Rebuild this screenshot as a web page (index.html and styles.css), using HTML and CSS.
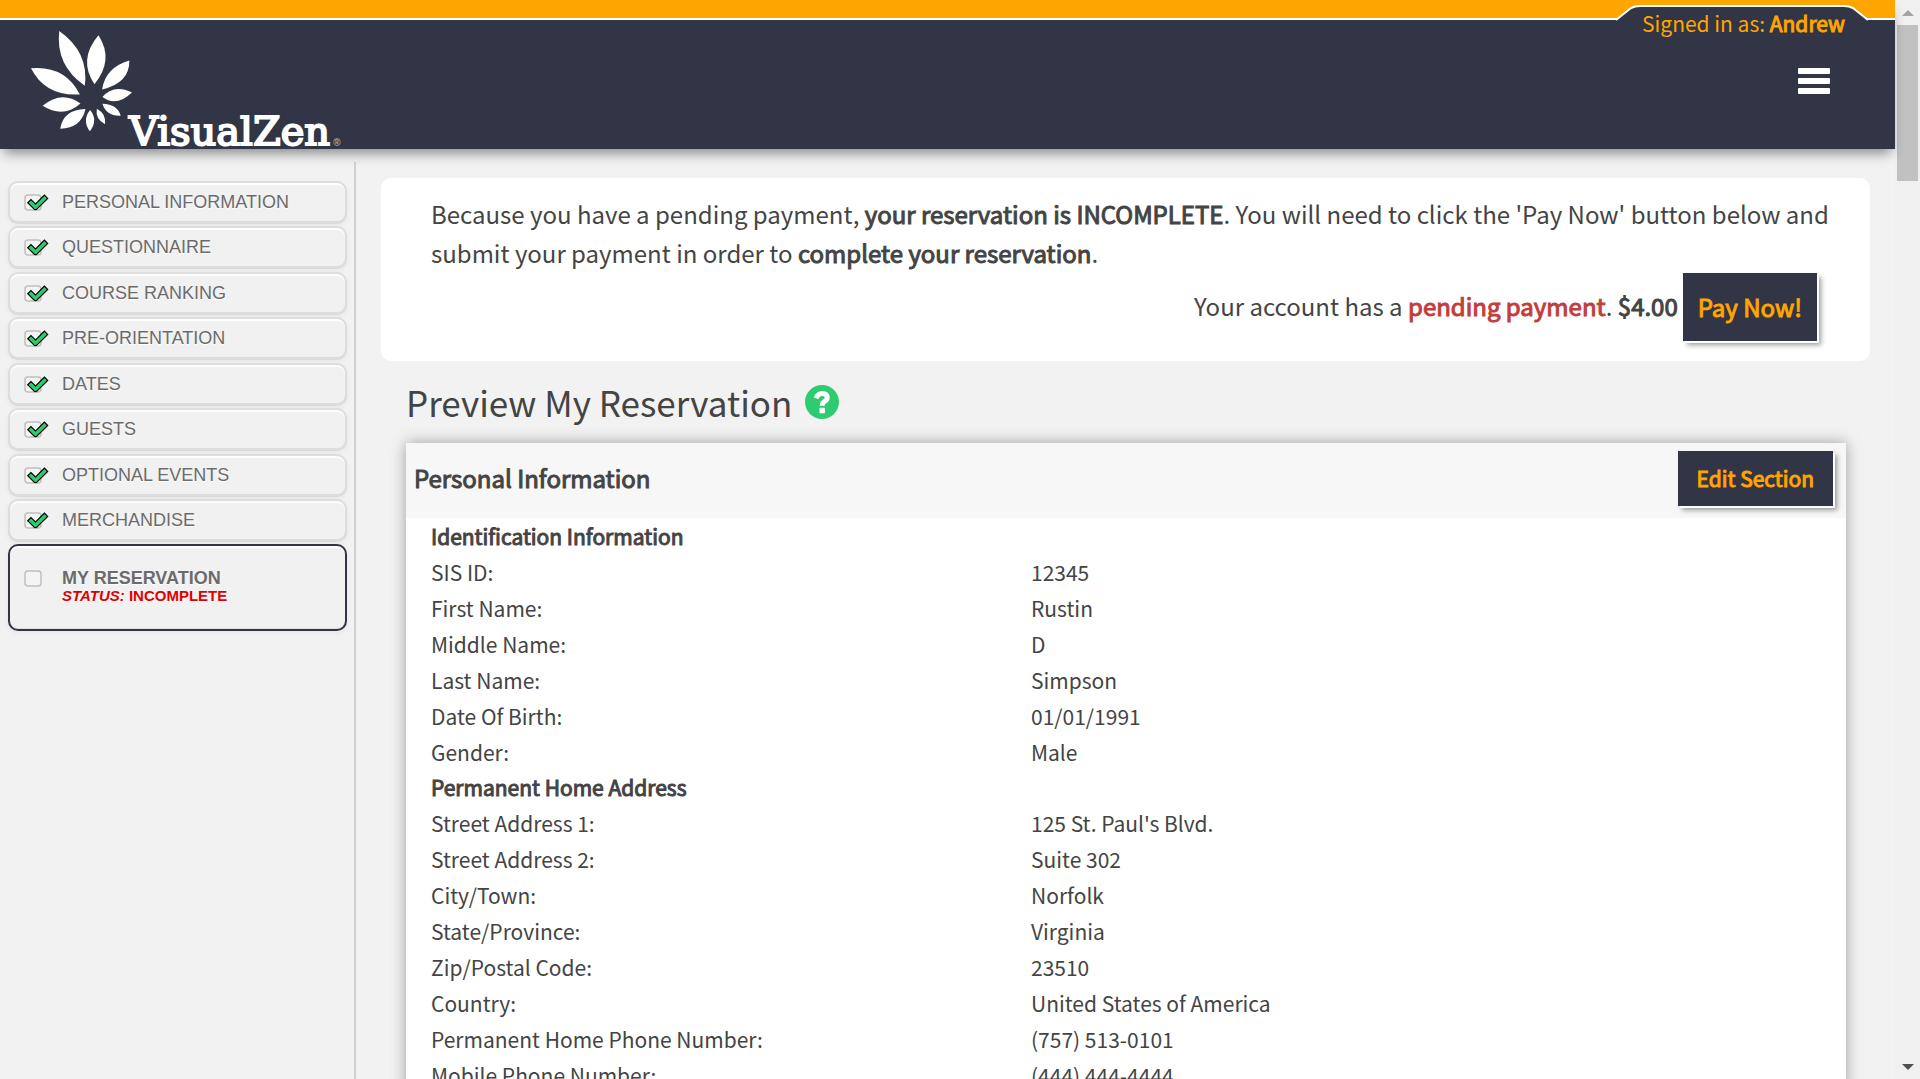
FILE: index.html
```html
<!DOCTYPE html>
<html lang="en">
<head>
<meta charset="utf-8">
<meta name="viewport" content="width=device-width, initial-scale=1">
<title>Preview My Reservation - VisualZen</title>
<link rel="stylesheet" href="styles.css">
</head>
<body>
<svg class="symbols" aria-hidden="true">
  <symbol id="box" viewBox="0 0 26 20"><rect x="1" y="3" width="16" height="15" rx="3" fill="#f4f4f4" stroke="#bfbfbf" stroke-width="1.5"/></symbol>
  <symbol id="check" viewBox="0 0 26 20">
    <rect x="1" y="3" width="16" height="15" rx="3" fill="#f4f4f4" stroke="#bfbfbf" stroke-width="1.5"/>
    <g fill="none" stroke-linecap="square" stroke-linejoin="round">
      <path d="M7 10.8L11.5 15.2L20.4 6.4" stroke="#000" stroke-width="5.8"/>
      <path d="M7 10.8L11.5 15.2L20.4 6.4" stroke="#2ecc71" stroke-width="3.4"/>
    </g>
  </symbol>
</svg>
<div class="window">
  <div class="page">
    <header class="header">
      <a class="logo" href="#">
        <svg class="lotus" viewBox="90 90 310 310" aria-hidden="true"><g fill="#fff">
          <path d="M178 93Q268 156 255 258Q166 196 178 93Z"/>
          <path d="M296 106Q344 180 284 253Q234 180 296 106Z"/>
          <path d="M389 182Q390 250 307 269Q317 203 389 182Z"/>
          <path d="M397 278Q350 323 308 292Q342 252 397 278Z"/>
          <path d="M363 348Q320 350 308 312Q354 314 363 348Z"/>
          <path d="M316 374Q286 358 291 327Q320 342 316 374Z"/>
          <path d="M270 395Q246 362 271 331Q296 362 270 395Z"/>
          <path d="M181 387Q190 330 257 328Q244 386 181 387Z"/>
          <path d="M128 318Q185 270 242 311Q190 357 128 318Z"/>
          <path d="M93 205Q196 196 240 284Q136 290 93 205Z"/>
        </g></svg>
        <span class="wordmark">VisualZen</span><span class="mark">®</span>
      </a>
      <div class="account">
        <svg class="account-tab" viewBox="0 0 252 17" aria-hidden="true"><path d="M0 17V15L15 3Q19 1 24 1H228Q233 1 237 3L252 15V17Z" fill="#323545"/><path d="M0 15L15 3Q19 1 24 1H228Q233 1 237 3L252 15" fill="none" stroke="#fff" stroke-width="2"/></svg>
        <span class="account-text">Signed in as: <strong>Andrew</strong></span>
      </div>
      <button class="menu" type="button" aria-label="Menu">
        <svg viewBox="0 0 32 26" aria-hidden="true"><g fill="#fff"><rect width="32" height="6" rx="1"/><rect y="10" width="32" height="6" rx="1"/><rect y="20" width="32" height="6" rx="1"/></g></svg>
      </button>
    </header>
    <div class="columns">
      <nav class="steps" aria-label="Reservation steps">
        <div class="step-list">
          <a class="step" href="#"><svg class="tick"><use href="#check"/></svg>PERSONAL INFORMATION</a>
          <a class="step" href="#"><svg class="tick"><use href="#check"/></svg>QUESTIONNAIRE</a>
          <a class="step" href="#"><svg class="tick"><use href="#check"/></svg>COURSE RANKING</a>
          <a class="step" href="#"><svg class="tick"><use href="#check"/></svg>PRE-ORIENTATION</a>
          <a class="step" href="#"><svg class="tick"><use href="#check"/></svg>DATES</a>
          <a class="step" href="#"><svg class="tick"><use href="#check"/></svg>GUESTS</a>
          <a class="step" href="#"><svg class="tick"><use href="#check"/></svg>OPTIONAL EVENTS</a>
          <a class="step" href="#"><svg class="tick"><use href="#check"/></svg>MERCHANDISE</a>
        </div>
        <a class="step current" href="#" aria-current="step"><svg class="tick"><use href="#box"/></svg><span>MY RESERVATION<span class="status"><em>STATUS:</em> INCOMPLETE</span></span></a>
      </nav>
      <main class="main">
        <section class="notice">
          <p class="notice-text">Because you have a pending payment, <strong>your reservation is INCOMPLETE</strong>. You will need to click the 'Pay Now' button below and submit your payment in order to <strong>complete your reservation</strong>.</p>
          <div class="pay">
            <span class="pay-text">Your account has a <strong class="pending">pending payment</strong>. <strong>$4.00</strong></span>
            <button class="action pay-button" type="button">Pay Now!</button>
          </div>
        </section>
        <h1 class="title">Preview My Reservation
          <svg class="help" viewBox="0 0 34 34" role="img" aria-label="Help"><circle cx="17" cy="17" r="17" fill="#2ecc71"/><path d="M11 13.2Q13 8.4 17 8.4Q22.2 8.4 22.2 12.6Q22.2 15 19.6 16.4Q17.2 17.7 17.2 20.8" fill="none" stroke="#fff" stroke-width="5"/><rect x="14.5" y="22.8" width="5.4" height="5.4" rx="0.6" fill="#fff"/></svg>
        </h1>
        <section class="card">
          <div class="card-head">
            <h2 class="card-title">Personal Information</h2>
            <button class="action edit-button" type="button">Edit Section</button>
          </div>
          <table class="details">
            <colgroup><col class="label-col"><col></colgroup>
            <tbody>
              <tr><th class="group" colspan="2" scope="colgroup">Identification Information</th></tr>
              <tr><th scope="row">SIS ID:</th><td>12345</td></tr>
              <tr><th scope="row">First Name:</th><td>Rustin</td></tr>
              <tr><th scope="row">Middle Name:</th><td>D</td></tr>
              <tr><th scope="row">Last Name:</th><td>Simpson</td></tr>
              <tr><th scope="row">Date Of Birth:</th><td>01/01/1991</td></tr>
              <tr><th scope="row">Gender:</th><td>Male</td></tr>
              <tr><th class="group" colspan="2" scope="colgroup">Permanent Home Address</th></tr>
              <tr><th scope="row">Street Address 1:</th><td>125 St. Paul's Blvd.</td></tr>
              <tr><th scope="row">Street Address 2:</th><td>Suite 302</td></tr>
              <tr><th scope="row">City/Town:</th><td>Norfolk</td></tr>
              <tr><th scope="row">State/Province:</th><td>Virginia</td></tr>
              <tr><th scope="row">Zip/Postal Code:</th><td>23510</td></tr>
              <tr><th scope="row">Country:</th><td>United States of America</td></tr>
              <tr><th scope="row">Permanent Home Phone Number:</th><td>(757) 513-0101</td></tr>
              <tr><th scope="row">Mobile Phone Number:</th><td>(444) 444-4444</td></tr>
            </tbody>
          </table>
        </section>
      </main>
    </div>
  </div>
  <div class="scrollbar" aria-hidden="true">
    <svg class="arrow" viewBox="0 0 12 6"><path d="M0 6L6 0L12 6Z" fill="#a3a3a3"/></svg>
    <div class="thumb"></div>
    <svg class="arrow down" viewBox="0 0 12 6"><path d="M0 0H12L6 6Z" fill="#505050"/></svg>
  </div>
</div>
</body>
</html>
```
FILE: styles.css
```css
* { box-sizing: border-box; }

body {
  margin: 0;
  background: #f2f2f2;
  color: #444;
  font-family: "Noto Sans CJK JP", sans-serif;
  font-size: 21px;
}

/* regular outlines thickened slightly, keeping the regular widths */
strong, .group, .card-title, .action {
  font-weight: 400;
  -webkit-text-stroke: 1px currentColor;
}

button { border: 0; margin: 0; padding: 0; font: inherit; cursor: pointer; }

.symbols { display: none; }

.window { display: flex; height: 100vh; overflow: hidden; }
.page { flex: 1; min-width: 0; }

/* header */
.header {
  position: relative;
  display: flex;
  justify-content: space-between;
  align-items: flex-start;
  height: 149px;
  padding: 12px 65px 0 30px;
  background: #323545;
  border-top: 18px solid #ffa500;
  box-shadow: inset 0 2px #fff, 0 8px 12px -4px rgba(0, 0, 0, .45);
}
.logo { display: flex; align-items: flex-end; color: #fff; text-decoration: none; }
.lotus { width: 103px; height: 103px; margin-bottom: 20px; }
.wordmark {
  margin-left: -4px;
  font: 40px/44px "DejaVu Serif", serif;
  -webkit-text-stroke: 2px currentColor;
}
.mark { margin: 0 0 4px 3px; color: #a9aab2; font: bold 10px/12px "Liberation Sans", sans-serif; }
.account { position: absolute; top: -13px; right: 27px; width: 252px; }
.account-tab { display: block; width: 252px; height: 17px; }
.account-text {
  position: absolute;
  top: 2px;
  left: 26px;
  color: #ffa500;
  line-height: 32px;
  white-space: nowrap;
}
.menu { margin-top: 38px; background: none; }
.menu svg { display: block; width: 32px; height: 26px; }

/* step list */
.columns { display: flex; padding-top: 13px; }
.steps {
  display: flex;
  flex-direction: column;
  gap: 3px;
  flex: 0 0 356px;
  height: 100vh;
  padding: 19px 7px 0 8px;
  border-right: 2px solid #d0d0d0;
  font-family: "Liberation Sans", Arial, sans-serif;
}
.step-list {
  display: flex;
  flex-direction: column;
  justify-content: space-between;
  height: 360px;
}
.step {
  display: flex;
  align-items: center;
  gap: 12px;
  height: 42px;
  padding: 0 14px;
  border: 2px solid #ddd;
  border-radius: 10px;
  background: #f1f1f1;
  box-shadow: inset 0 2px #fdfdfd, 0 1px #dadada, 0 2px 6px rgba(0, 0, 0, .05);
  color: #6b6b6b;
  font-size: 18px;
  line-height: 20px;
  text-decoration: none;
  text-shadow: 0 1px #fff;
}
.tick { flex: none; width: 26px; height: 20px; }
.current {
  align-items: flex-start;
  height: 87px;
  padding-top: 22px;
  border-color: #323545;
  box-shadow: inset 0 2px #fdfdfd, inset 0 -1px #ddd, 0 2px 6px rgba(0, 0, 0, .05);
  font-weight: 700;
}
.status { display: block; color: #e00000; font-size: 15px; line-height: 16px; }

/* main column */
.main { flex: 1; min-width: 0; padding: 16px 25px 0; }
.notice {
  padding: 16px 40px 20px 50px;
  border-radius: 10px;
  background: #fff;
  font-size: 24px;
  line-height: 39px;
}
.notice-text { margin: 0 0 1px; }
.pay {
  display: flex;
  justify-content: flex-end;
  align-items: center;
  gap: 5px;
  padding-right: 13px;
}
.pay-text { padding-bottom: 4px; }
.pending { color: #c43c3c; }
.action {
  background: #323545;
  box-shadow: 2px 2px #fff, 4px 4px 5px rgba(0, 0, 0, .4);
  color: #ffa500;
}
.pay-button { height: 68px; padding: 0 15px 2px; }
.title {
  display: flex;
  align-items: center;
  gap: 13px;
  margin: 0 25px;
  font-size: 35px;
  font-weight: 400;
  line-height: 82px;
}
.help { width: 34px; height: 34px; }
.card {
  margin: 0 24px 0 25px;
  background: #fff;
  box-shadow: 0 0 14px rgba(0, 0, 0, .35);
}
.card-head {
  display: flex;
  justify-content: space-between;
  align-items: center;
  padding: 8px 13px 12px 8px;
  background: #f7f7f7;
}
.card-title { margin: 0; padding-bottom: 2px; font-size: 24px; line-height: 40px; }
.edit-button { height: 55px; padding: 0 19px 2px; }
.details {
  width: 100%;
  padding-top: 1px;
  border-spacing: 0;
  table-layout: fixed;
}
.label-col { width: calc(100% * 5 / 12); }
.details th, .details td {
  padding: 0 0 0 25px;
  font-weight: 400;
  line-height: 36px;
  text-align: left;
}
.details .group { line-height: 35px; }

/* window scroll bar */
.scrollbar {
  display: flex;
  flex-direction: column;
  align-items: center;
  flex: 0 0 25px;
  padding: 10px 2px 9px;
  background: #f0f0f0;
}
.arrow { width: 12px; height: 6px; }
.thumb { width: 21px; height: 156px; margin-top: 9px; background: #c1c1c1; }
.down { margin-top: auto; }
```
